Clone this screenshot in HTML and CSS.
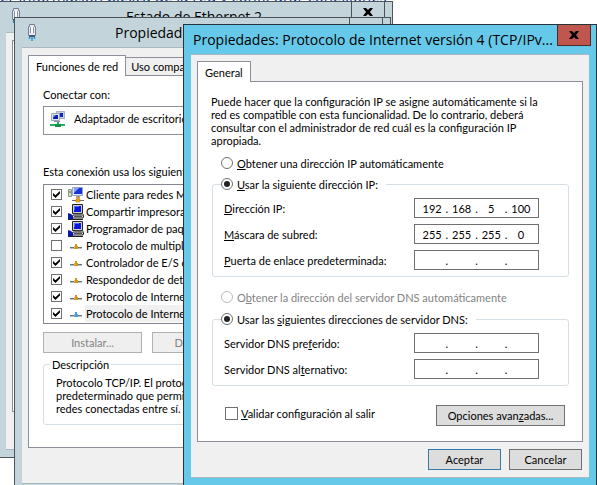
FILE: index.html
```html
<!DOCTYPE html>
<html lang="es">
<head>
<meta charset="utf-8">
<title>Propiedades de red</title>
<link rel="stylesheet" href="styles.css">
</head>
<body>
<svg class="defs" aria-hidden="true">
  <symbol id="plug" viewBox="0 0 10 18">
    <path d="M1.500 2.500h1v-2h5v2h1v9h-7z" fill="#e4eaf2" stroke="#73809c"/>
    <path d="M4 3h2v6H4z" fill="#fff"/><path d="M3.500 3v6M6.500 3v6" stroke="#8a92a8"/>
    <path d="M2 11h6v2H2z" fill="#4c587a"/>
    <path d="M2.500 13v2M5 13v4M7.500 13v2" stroke="#1b9dd4" stroke-width="1.500"/>
  </symbol>
  <symbol id="adapter" viewBox="0 0 16 16">
    <path d="M6.500.5h8v7h-8z" fill="#c9cfe0" stroke="#a9afc2"/>
    <path d="M8 2h5v4H8z" fill="#1029b4"/>
    <path d="M1.500 2.500h8v7h-8z" fill="#dfe4ee" stroke="#a0a6b9"/>
    <path d="M3 4h5v4H3z" fill="#0c1db0"/><path d="M3 4h3L3 7z" fill="#6e92f0"/>
    <path d="M4 10h6v1H4z" fill="#8a90a5"/>
    <path d="M7 11h2v2h6v2H0v-2h7z" fill="#1fb45e"/><path d="M5 13h6v3H5z" fill="#109048"/>
  </symbol>
  <symbol id="client" viewBox="0 0 16 16">
    <path d="M.5 2.500h3v7h-3z" fill="#d5dcd5" stroke="#8a958a"/><path d="M1 4h2v2H1z" fill="#83a878"/>
    <path d="M4.500.5h10v8h-10z" fill="#e3e7f5" stroke="#9aa4c8"/>
    <path d="M6 1h8v6H6z" fill="#1533d8"/><path d="M6 1h5L6 6z" fill="#7ea0ff"/>
    <path d="M8 9h4v2H8z" fill="#a5a9b5"/>
    <path d="M4 13h12v1H4z" fill="#66707a"/><path d="M9 10h2v2h1v3H8v-3h1z" fill="#e7a018" stroke="#b67808" stroke-width=".5"/>
  </symbol>
  <symbol id="service" viewBox="0 0 16 16">
    <path d="M4.500.5h10v9h-10z" fill="#d0d0d0" stroke="#222"/>
    <path d="M6 2h7v6H6z" fill="#0818d8"/><path d="M6 2h5v1H7v3H6z" fill="#4f6eff"/>
    <path d="M5 11l-1 3h11l1-3z" fill="#e0e0e0" stroke="#222"/>
    <path d="M7 10h6M6 12.500h8" stroke="#555"/>
    <path d="M0 9l3 1 2 2v4H0z" fill="#0a18a8"/><path d="M1 15h14v1H1z" fill="#222"/>
  </symbol>
  <symbol id="protocol" viewBox="0 0 12 8">
    <path d="M0 5h12v1H0z" fill="#66737d"/><path d="M0 6h12v1H0z" fill="#b8c0c5"/>
    <path d="M5 2h2v2h1v3H4V4h1z" fill="currentColor"/><path d="M4 4h1v2H4z" fill="#fff" opacity=".4"/>
  </symbol>
</svg>

<p class="page-link"><a href="#">er información básica de la red y configurar conexiones</a></p>

<section class="window status-window">
  <header class="titlebar">
    <svg class="plug"><use href="#plug"/></svg>
    <h2>Estado de Ethernet 2</h2>
    <button class="close" aria-label="Cerrar"><svg viewBox="0 0 10 8"><path d="M0 0h3l2 2 2-2h3L7 4l3 4H7L5 6 3 8H0l3-4z"/></svg></button>
  </header>
  <div class="client"><div class="panel"></div></div>
</section>

<section class="window adapter-window">
  <header class="titlebar">
    <svg class="plug"><use href="#plug"/></svg>
    <h2>Propiedades de Ethernet 2</h2>
    <button class="close" aria-label="Cerrar"></button>
  </header>
  <div class="client">
    <nav class="tabs"><button class="tab active">Funciones de red</button><button class="tab">Uso compartido</button></nav>
    <div class="panel">
      <p class="caption">Conectar con:</p>
      <div class="device"><svg><use href="#adapter"/></svg>Adaptador de escritorio</div>
      <p class="caption list-caption">Esta conexión usa los siguientes elementos:</p>
      <ul class="items">
        <li><label><input type="checkbox" checked><svg><use href="#client"/></svg><span>Cliente para redes Microsoft</span></label></li>
        <li><label><input type="checkbox" checked><svg><use href="#service"/></svg><span>Compartir impresoras y archivos</span></label></li>
        <li><label><input type="checkbox" checked><svg><use href="#service"/></svg><span>Programador de paquetes QoS</span></label></li>
        <li><label><input type="checkbox"><svg class="small"><use href="#protocol"/></svg><span>Protocolo de multiplexor</span></label></li>
        <li><label><input type="checkbox" checked><svg class="small"><use href="#protocol"/></svg><span>Controlador de E/S del asignador</span></label></li>
        <li><label><input type="checkbox" checked><svg class="small"><use href="#protocol"/></svg><span>Respondedor de detección</span></label></li>
        <li><label><input type="checkbox" checked><svg class="small"><use href="#protocol"/></svg><span>Protocolo de Internet versión 6</span></label></li>
        <li class="selected"><label><input type="checkbox" checked><svg class="small"><use href="#protocol"/></svg><span>Protocolo de Internet versión 4</span></label></li>
      </ul>
      <div class="item-actions">
        <button class="button" disabled>Instalar...</button>
        <button class="button" disabled>Desinstalar</button>
        <button class="button">Propiedades</button>
      </div>
      <fieldset class="description">
        <legend>Descripción</legend>
        <p>Protocolo TCP/IP. El protocolo<br>predeterminado que permite<br>redes conectadas entre sí.</p>
      </fieldset>
    </div>
  </div>
</section>

<section class="window ip-window">
  <header class="titlebar">
    <h1>Propiedades: Protocolo de Internet versión 4 (TCP/IPv...</h1>
    <button class="close" aria-label="Cerrar"><svg viewBox="0 0 10 8"><path d="M0 0h3l2 2 2-2h3L7 4l3 4H7L5 6 3 8H0l3-4z"/></svg></button>
  </header>
  <main class="client">
    <nav class="tabs"><button class="tab active">General</button></nav>
    <form class="panel">
      <p class="intro">Puede hacer que la configuración IP se asigne automáticamente si la<br>red es compatible con esta funcionalidad. De lo contrario, deberá<br>consultar con el administrador de red cuál es la configuración IP<br>apropiada.</p>
      <label class="choice lone"><input type="radio" name="ip"><span><u>O</u>btener una dirección IP automáticamente</span></label>
      <fieldset class="group">
        <legend><label class="choice"><input type="radio" name="ip" checked><span><u>U</u>sar la siguiente dirección IP:</span></label></legend>
        <div class="field"><label for="ip1"><u>D</u>irección IP:</label>
          <div class="octets"><input id="ip1" value="192">.<input aria-label="IP 2" value="168">.<input aria-label="IP 3" value="5">.<input aria-label="IP 4" value="100"></div></div>
        <div class="field"><label for="mask1"><u>M</u>áscara de subred:</label>
          <div class="octets"><input id="mask1" value="255">.<input aria-label="Máscara 2" value="255">.<input aria-label="Máscara 3" value="255">.<input aria-label="Máscara 4" value="0"></div></div>
        <div class="field"><label for="gate1"><u>P</u>uerta de enlace predeterminada:</label>
          <div class="octets"><input id="gate1">.<input aria-label="Puerta 2">.<input aria-label="Puerta 3">.<input aria-label="Puerta 4"></div></div>
      </fieldset>
      <label class="choice lone dns-auto"><input type="radio" name="dns" disabled><span>O<u>b</u>tener la dirección del servidor DNS automáticamente</span></label>
      <fieldset class="group">
        <legend><label class="choice"><input type="radio" name="dns" checked><span>Usar las <u>s</u>iguientes direcciones de servidor DNS:</span></label></legend>
        <div class="field"><label for="dns1">Servidor DNS pre<u>f</u>erido:</label>
          <div class="octets"><input id="dns1">.<input aria-label="Preferido 2">.<input aria-label="Preferido 3">.<input aria-label="Preferido 4"></div></div>
        <div class="field"><label for="alt1">Servidor DNS al<u>t</u>ernativo:</label>
          <div class="octets"><input id="alt1">.<input aria-label="Alternativo 2">.<input aria-label="Alternativo 3">.<input aria-label="Alternativo 4"></div></div>
      </fieldset>
      <div class="extras">
        <label class="validate"><input type="checkbox"><span><u>V</u>alidar configuración al salir</span></label>
        <button type="button" class="button">Opciones avan<u>z</u>adas...</button>
      </div>
    </form>
    <footer class="actions">
      <button class="button primary">Aceptar</button>
      <button class="button">Cancelar</button>
    </footer>
  </main>
</section>
</body>
</html>
```
FILE: styles.css
```css
* { box-sizing: border-box; }

body {
  margin: 0;
  height: 100vh;
  position: relative;
  overflow: hidden;
  background: #fff;
  color: #000;
  font: 11px/13px Lato, "Liberation Sans", sans-serif;
}

p, h1, h2, ul { margin: 0; padding: 0; }
button, input { font: inherit; color: inherit; margin: 0; padding: 0; }
.defs { position: absolute; width: 0; height: 0; }

.page-link {
  margin-top: -13px;
  font: 15px/18px "Open Sans", sans-serif;
  white-space: nowrap;
}
.page-link a { color: #039; }

/* Windows */
.window {
  position: absolute;
  display: flex;
  flex-direction: column;
  background: #c3d5db;
  border: 1px solid #4c5457;
  padding: 0 7px 7px;
}
.status-window { left: -2px; top: 1px; width: 395px; height: 457px; }
.adapter-window {
  left: 14px;
  top: 17px;
  width: 377px;
  height: 475px;
}
.ip-window {
  left: 183px;
  top: 24px;
  right: 0;
  bottom: -1px;
  background: #66c9ea;
  border-color: #26343a;
}

.titlebar {
  display: flex;
  align-items: center;
  height: 29px;
  flex: none;
}
.titlebar h1, .titlebar h2 {
  flex: 1;
  min-width: 0;
  font: 14px/20px "Open Sans", "Noto Sans", sans-serif;
  white-space: nowrap;
  text-align: center;
}
.titlebar h1 { text-align: left; padding-left: 2px; }
.status-window h2 { padding-left: 16px; }
.plug { width: 10px; height: 18px; margin-left: 5px; }
.close {
  width: 34px;
  height: 21px;
  flex: none;
  align-self: flex-start;
  background: none;
  border: 1px solid #4c5457;
  border-top: 0;
}
.close svg { width: 10px; height: 8px; display: block; margin: auto; }
.ip-window .close { background: #c0574f; border-color: #4f2a29; margin-right: -2px; }

.client {
  flex: 1;
  display: flex;
  flex-direction: column;
  background: #f0f0f0;
  border-top: 1px solid #a9b9bf;
  border-bottom: 1px solid #a9b9bf;
  padding: 7px 6px;
}
.panel { background: #fff; border: 1px solid #8c8e99; }
.status-window .client { padding-bottom: 37px; }
.status-window .titlebar { height: 30px; }
.status-window .panel { flex: 1; }

/* Tabs */
.tabs { display: flex; align-items: flex-end; margin-bottom: -1px; height: 21px; }
.tab {
  height: 19px;
  padding: 0 5px;
  background: #f0f0f0;
  border: 1px solid #8c8e99;
  border-left: 0;
  white-space: nowrap;
}
.tab.active {
  height: 21px;
  padding: 0 7px;
  background: #fff;
  border-left: 1px solid #8c8e99;
  border-bottom: 0;
  position: relative;
}

/* Buttons */
.button {
  height: 21px;
  background: #ddd;
  border: 1px solid #707070;
  white-space: nowrap;
}
.button:disabled { background: #efefef; border-color: #adb2b5; color: #838383; }
.button.primary { border-color: #3579a8; }

/* Adapter properties */
.adapter-window .panel { padding: 12px 14px 13px; height: 373px; }
.adapter-window .titlebar h2 { text-align: left; padding-left: 78px; }
.adapter-window .close { height: 20px; }
.device {
  display: flex;
  align-items: center;
  gap: 8px;
  height: 29px;
  margin-top: 5px;
  padding: 0 6px 4px;
  border: 1px solid #8c8e99;
}
.device svg { width: 16px; height: 16px; }
.list-caption { margin-top: 30px; }
.items {
  list-style: none;
  margin-top: 6px;
  padding: 1px 0;
  border: 1px solid #828790;
}
.items label { display: flex; align-items: center; height: 17px; padding-left: 7px; }
.items svg { width: 16px; height: 16px; margin: 0 1px 0 6px; flex: none; }
.items .small { width: 12px; height: 8px; margin: 0 3px 0 8px; color: #d59618; }
.items span { flex: 1; line-height: 17px; padding-left: 1px; white-space: nowrap; }
.items .selected .small { color: #4b9ae2; }
.items .selected span { background: #f0f0f0; }
.item-actions { display: grid; grid-template-columns: repeat(3, 99px); gap: 10px; margin-top: 8px; }
.description { margin: 5px 0 0; padding: 5px 12px 9px; border: 1px solid #d5dfe5; border-radius: 3px; }
.description legend { padding: 0 2px; margin-left: -6px; }

/* Check boxes and radio buttons */
input[type="checkbox"], input[type="radio"] {
  appearance: none;
  flex: none;
  display: grid;
  place-content: center;
  background: #fff;
  border: 1px solid #707070;
}
input[type="checkbox"] { width: 13px; height: 13px; }
.items input[type="checkbox"] { width: 11px; height: 11px; }
input[type="checkbox"]:checked::after {
  content: "";
  width: 7px;
  height: 7px;
  background: #000;
  clip-path: polygon(0 30%, 35% 62%, 100% 0, 100% 36%, 35% 100%, 0 65%);
}
input[type="radio"] { width: 12px; height: 12px; border-radius: 50%; }
input[type="radio"]:checked::after {
  content: "";
  width: 6px;
  height: 6px;
  border-radius: 50%;
  background: #222;
}
input[type="radio"]:disabled { border-color: #bcbcbc; }
input:disabled + span { color: #838383; }

/* IP properties */
.ip-window .client { padding-top: 6px; }
.ip-window .panel { padding: 13px 13px 15px; }
.intro { white-space: nowrap; }
.choice { display: flex; align-items: center; gap: 4px; height: 14px; white-space: nowrap; }
.lone { margin: 9px 0 7px 10px; }
.dns-auto { margin: 13px 0 8px 10px; }
.group {
  margin: 0 0 0 1px;
  padding: 7px 29px 6px 11px;
  border: 1px solid #d5dfe5;
  border-radius: 3px;
  display: flex;
  flex-direction: column;
  gap: 6px;
}
.group legend { margin-left: -3px; padding: 0 8px 0 0; }
.field { display: flex; align-items: center; justify-content: space-between; }
.octets {
  display: flex;
  justify-content: center;
  align-items: center;
  width: 125px;
  height: 20px;
  border: 1px solid #707070;
  background: #fff;
}
.octets input { width: 27px; height: 16px; border: 0; text-align: center; background: none; }
.extras { display: flex; align-items: flex-start; justify-content: space-between; padding: 19px 4px 0 14px; }
.validate { display: flex; align-items: center; gap: 3px; padding-top: 2px; }
.extras .button { width: 129px; }
.actions { display: flex; justify-content: flex-end; gap: 8px; padding: 7px 1px 0; }
.actions .button { width: 73px; }
```
